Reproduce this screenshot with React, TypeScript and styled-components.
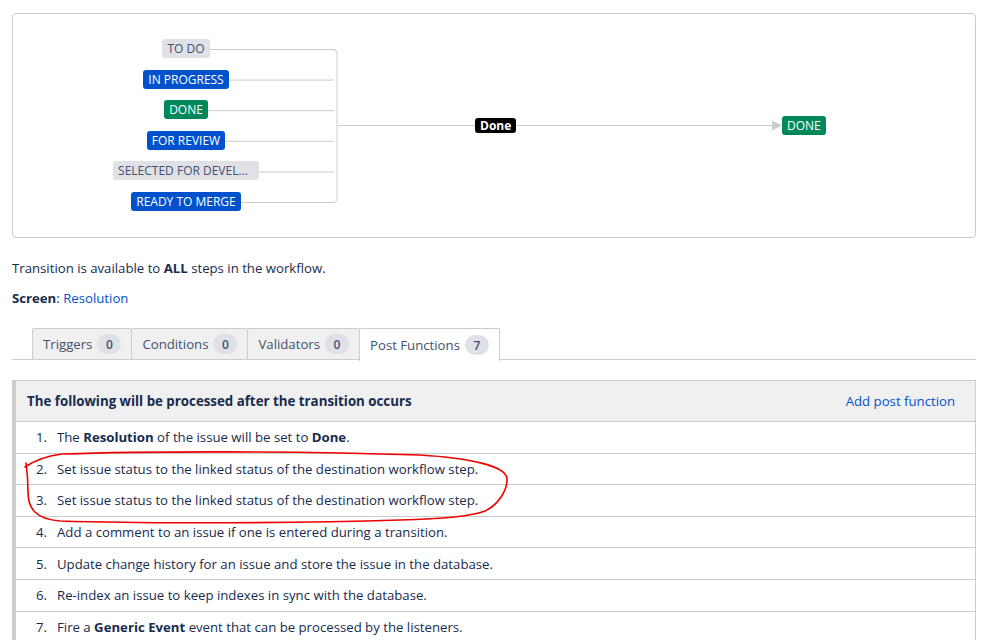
import styled, { createGlobalStyle } from 'styled-components';

const GlobalStyle = createGlobalStyle`
  body {
    margin: 0;
    background: #fff;
    font-family: "Segoe UI", "Open Sans", "Noto Sans", sans-serif;
    font-size: 13.2px;
    color: #172b4d;
  }
`;

type Tone = 'gray' | 'blue' | 'green';

const toneColors: Record<Tone, { bg: string; fg: string }> = {
  gray: { bg: '#dfe1e6', fg: '#42526e' },
  blue: { bg: '#0052cc', fg: '#ffffff' },
  green: { bg: '#00875a', fg: '#ffffff' },
};

const statuses: { label: string; tone: Tone; extra?: boolean }[] = [
  { label: 'TO DO', tone: 'gray' },
  { label: 'IN PROGRESS', tone: 'blue' },
  { label: 'DONE', tone: 'green' },
  { label: 'FOR REVIEW', tone: 'blue' },
  { label: 'SELECTED FOR DEVEL...', tone: 'gray', extra: true },
  { label: 'READY TO MERGE', tone: 'blue' },
];

const tabs = [
  { label: 'Triggers', count: 0 },
  { label: 'Conditions', count: 0 },
  { label: 'Validators', count: 0 },
  { label: 'Post Functions', count: 7, active: true },
];

const postFunctions: React.ReactNode[] = [
  <>
    The <b>Resolution</b> of the issue will be set to <b>Done</b>.
  </>,
  'Set issue status to the linked status of the destination workflow step.',
  'Set issue status to the linked status of the destination workflow step.',
  'Add a comment to an issue if one is entered during a transition.',
  'Update change history for an issue and store the issue in the database.',
  'Re-index an issue to keep indexes in sync with the database.',
  <>
    Fire a <b>Generic Event</b> event that can be processed by the listeners.
  </>,
];

const Page = styled.div`
  position: relative;
  padding: 13px 20px 0 12px;
`;

const Diagram = styled.div`
  position: relative;
  height: 223px;
  border: 1px solid #ccc;
  border-radius: 4px;
`;

const Lines = styled.svg`
  position: absolute;
  left: 0;
  top: 0;
`;

// source statuses, stacked and centred on the connector origin
const StatusColumn = styled.div`
  position: absolute;
  left: 0;
  top: 25px;
  width: 346px;
  display: flex;
  flex-direction: column;
  align-items: center;
  gap: 11.6px;
`;

const Lozenge = styled.span<{ $tone: Tone; $extra?: boolean }>`
  display: inline-block;
  height: 19px;
  line-height: 19px;
  padding: 0 ${(p) => (p.$extra ? '11px' : '5px')} 0 5px;
  border-radius: 3px;
  font-size: 12px;
  white-space: nowrap;
  background: ${(p) => toneColors[p.$tone].bg};
  color: ${(p) => toneColors[p.$tone].fg};
`;

const TargetNode = styled(Lozenge)`
  position: absolute;
  left: 769px;
  top: 102px;
`;

const TransitionLabel = styled.span`
  position: absolute;
  left: 462px;
  top: 104px;
  height: 15px;
  line-height: 15px;
  padding: 0 5px;
  border-radius: 3px;
  background: #000;
  color: #fff;
  font-size: 12px;
  font-weight: 700;
`;

const Info = styled.p`
  margin: 20px 0 0;
  line-height: 20px;
`;

const ScreenLine = styled.p`
  margin: 10px 0 0;
  line-height: 20px;
`;

const Link = styled.a`
  color: #0052cc;
  text-decoration: none;
  cursor: pointer;
`;

const TabBar = styled.div`
  margin-top: 20px;
  display: flex;
  padding-left: 20px;
  border-bottom: 1px solid #ccc;
  height: 31px;
`;

const Tab = styled.div<{ $active?: boolean }>`
  display: flex;
  align-items: center;
  gap: 5px;
  padding: 0 10px;
  height: ${(p) => (p.$active ? '32px' : '30px')};
  margin-right: -1px;
  border: 1px solid #ccc;
  border-bottom: ${(p) => (p.$active ? 'none' : '1px solid #ccc')};
  border-radius: 2px 2px 0 0;
  background: ${(p) => (p.$active ? '#fff' : '#f0f0f0')};
  color: #42526e;
  cursor: pointer;
  position: relative;
  z-index: ${(p) => (p.$active ? 1 : 0)};
`;

const Badge = styled.span`
  display: inline-flex;
  align-items: center;
  justify-content: center;
  min-width: 24px;
  height: 20px;
  padding: 0 4px;
  box-sizing: border-box;
  border-radius: 10px;
  background: #dfe1e6;
  color: #42526e;
  font-size: 12px;
  font-weight: 600;
`;

const FunctionsPanel = styled.div`
  margin-top: 20px;
  border-top: 1px solid #ccc;
  border-right: 1px solid #ccc;
  border-left: 4px solid #ccc;
`;

const PanelHeader = styled.div`
  display: flex;
  align-items: center;
  justify-content: space-between;
  height: 40px;
  padding: 0 20px 0 11px;
  background: #f0f0f0;
  border-bottom: 1px solid #ccc;
`;

const PanelTitle = styled.h3`
  margin: 0;
  font-size: 13.3px;
  font-weight: 700;
  color: #172b4d;
`;

const Row = styled.div`
  display: flex;
  align-items: center;
  height: 30.6px;
  padding-left: 20px;
  border-bottom: 1px solid #ccc;
`;

const Num = styled.span`
  width: 21px;
  flex: none;
`;

// hand-drawn red ring over rows 2 and 3
const Annotation = styled.svg`
  position: absolute;
  left: 0;
  top: 0;
  pointer-events: none;
`;

export default function App() {
  const rowY = (i: number) => 35.5 + i * 30.6;
  return (
    <Page>
      <GlobalStyle />
      <Diagram>
        <Lines width={964} height={223}>
          {statuses.map((s, i) => (
            <line key={s.label} x1={172} y1={rowY(i)} x2={321} y2={rowY(i)} stroke="#ccc" />
          ))}
          <path
            d={`M 320 ${rowY(0)} Q 324 ${rowY(0)} 324 ${rowY(0) + 4} L 324 ${rowY(5) - 4} Q 324 ${rowY(5)} 320 ${rowY(5)}`}
            fill="none"
            stroke="#ccc"
          />
          <line x1={324} y1={111.5} x2={760} y2={111.5} stroke="#ccc" />
          <polygon points="759,106.5 769,111.5 759,116.5" fill="#ccc" />
        </Lines>
        <StatusColumn>
          {statuses.map((s) => (
            <Lozenge key={s.label} $tone={s.tone} $extra={s.extra}>
              {s.label}
            </Lozenge>
          ))}
        </StatusColumn>
        <TransitionLabel>Done</TransitionLabel>
        <TargetNode $tone="green">DONE</TargetNode>
      </Diagram>

      <Info>
        Transition is available to <b>ALL</b> steps in the workflow.
      </Info>
      <ScreenLine>
        <b>Screen</b>: <Link>Resolution</Link>
      </ScreenLine>

      <TabBar>
        {tabs.map((t) => (
          <Tab key={t.label} $active={t.active}>
            {t.label}
            <Badge>{t.count}</Badge>
          </Tab>
        ))}
      </TabBar>

      <FunctionsPanel>
        <PanelHeader>
          <PanelTitle>The following will be processed after the transition occurs</PanelTitle>
          <Link>Add post function</Link>
        </PanelHeader>
        {postFunctions.map((text, i) => (
          <Row key={i}>
            <Num>{i + 1}.</Num>
            <span>{text}</span>
          </Row>
        ))}
      </FunctionsPanel>

      <Annotation width={996} height={640}>
        <path
          d="M 25 467 C 34 461, 45 456, 62 454 C 150 451, 300 451, 420 455 C 470 458, 505 466, 507 478 C 508 490, 498 505, 485 511 C 470 517, 440 519, 400 520 C 300 523, 150 524, 60 521 C 35 519, 28 508, 28 492 C 28 480, 27 470, 26 463"
          fill="none"
          stroke="#e00"
          strokeWidth={1.6}
          strokeLinecap="round"
        />
      </Annotation>
    </Page>
  );
}
